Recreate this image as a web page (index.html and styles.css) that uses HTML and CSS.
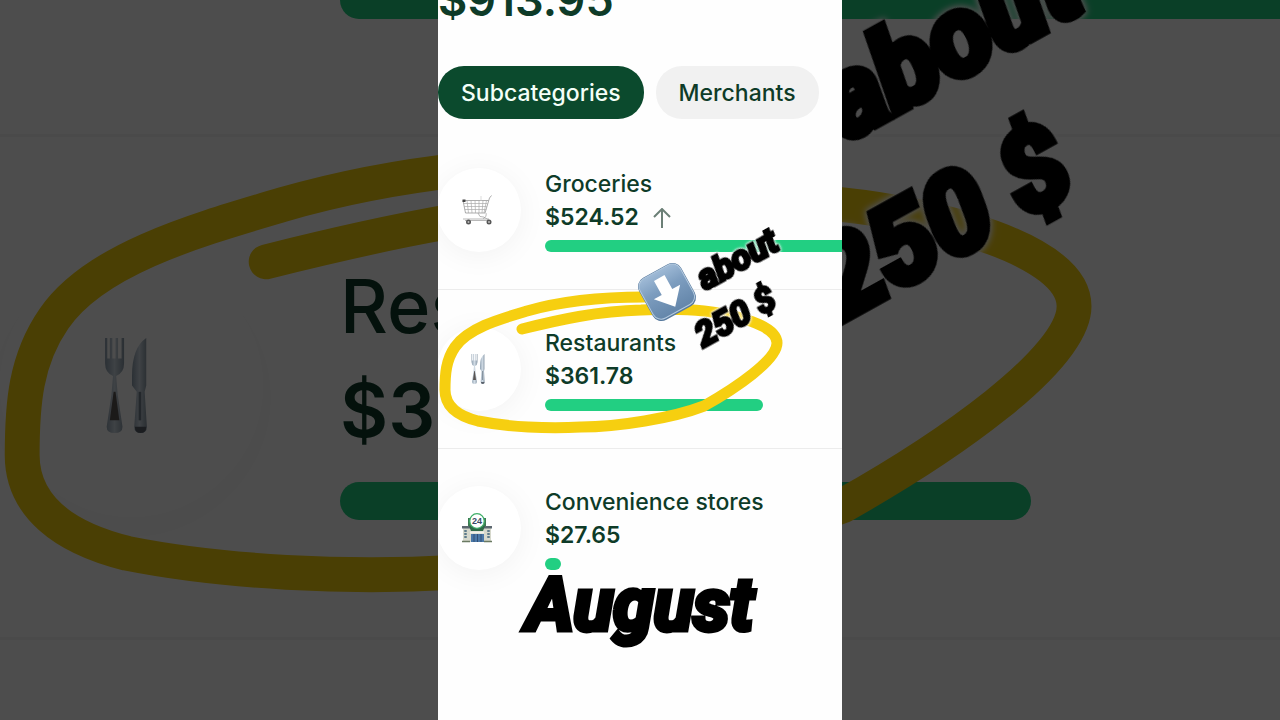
FILE: index.html
```html
<!DOCTYPE html>
<html lang="en">
<head>
    <meta charset="UTF-8">
    <meta name="viewport" content="width=device-width, initial-scale=1.0">
    <title>August spending</title>
    <link rel="stylesheet" href="styles.css">
</head>

<body>
    <!-- shared drawings -->
    <svg class="defs" aria-hidden="true">
        <defs>
            <linearGradient id="steel" x1="0" y1="0" x2="1" y2="0">
                <stop offset="0" stop-color="#8fa0b0"/>
                <stop offset="0.5" stop-color="#cfdae4"/>
                <stop offset="1" stop-color="#8b9aa8"/>
            </linearGradient>
            <linearGradient id="key" x1="0" y1="0" x2="0" y2="1">
                <stop offset="0" stop-color="#9fbad6"/>
                <stop offset="0.4" stop-color="#7d9dbf"/>
                <stop offset="1" stop-color="#6486aa"/>
            </linearGradient>
        </defs>

        <symbol id="cutlery" viewBox="0 0 30 30">
            <path d="M9.500 0v8q0 3 2.500 4l-.5 6-1.500 10q0 2 2.500 2t2.500-2L13.500 18l-.5-6q2.500-1 2.500-4V0h-.8v6.500h-1.100V0h-.8v6.500h-1V0H11v6.500h-.8V0z" fill="url(#steel)"/>
            <path d="M12.200 17l-1.200 9h3l-1.200-9z" fill="#5b5654"/>
            <path d="M22.500 0q-4.500 3-4.500 12v3l1.500 2-.8 11q0 2 2 2t2-2l-.7-11 .5-2V0z" fill="url(#steel)"/>
            <path d="M20.500 17v9" stroke="#75828e" stroke-width=".8"/>
            <path d="M18.900 28h3.600q0 2-1.800 2t-1.800-2z" fill="#59616b"/>
        </symbol>

        <symbol id="cart" viewBox="0 0 30 30">
            <g fill="none" stroke="#888" stroke-width=".7">
                <path d="M29.500.5l-2 2.500-4.500 15H3.500L1 5.500h25.500"/>
                <path d="M1.500 8.500h24M2.200 11.500h22.500M2.800 14.500h21.500" stroke="#aaa"/>
                <path d="M5 5.500L6.500 18M9 5.500l1 12.500M13 5.500l.5 12.500M17 5.500V18M21 5.500L20 18M24.500 5.500L22 18" stroke="#aaa"/>
                <path d="M19 1v5" stroke="#ccc"/>
                <path d="M16 18l2 3.500q4 0 6.500 2l2.500 2M24 18q1 4-3 5.500M1 24h26M3 25.500h24" stroke="#999"/>
            </g>
            <path d="M.5 4.500h3V7h-3z" fill="#444"/>
            <circle cx="6.500" cy="27" r="2.500" fill="#555"/>
            <circle cx="6.500" cy="27" r="1" fill="#bbb"/>
            <circle cx="27" cy="27" r="2.500" fill="#555"/>
            <circle cx="27" cy="27" r="1" fill="#bbb"/>
        </symbol>

        <symbol id="store" viewBox="0 0 30 30">
            <path d="M6 5h18v9H6z" fill="#3d7a52"/>
            <path d="M1 15h28v14H1z" fill="#d6d8cc"/>
            <path d="M0 13h30v2.500H0z" fill="#5d6870"/>
            <path d="M7 13h16l-2 5H9z" fill="#2f6a48"/>
            <path d="M8 18.500h14v2H8z" fill="#f1f1e8"/>
            <path d="M9 21h13v8H9z" fill="#4b78a8"/>
            <path d="M12 21v8M15.500 21v8M19 21v8" stroke="#2f4c70" stroke-width=".9"/>
            <path d="M3.500 17v9M26.500 17v9" stroke="#5f7c8c" stroke-width="2.500" stroke-dasharray="2 1"/>
            <path d="M0 28.500h8M22 28.500h8" stroke="#6a7a62" stroke-width="1.500"/>
            <circle cx="15" cy="8" r="7.300" fill="#fff" stroke="#3fae68" stroke-width="1.300"/>
            <text class="store-sign" x="15" y="11" text-anchor="middle">24</text>
        </symbol>

        <symbol id="marker" viewBox="0 0 404 720">
            <path class="marker-line" d="M84 329C120 320 160 311 203 310C225 309 248 309 266 311C295 314 339 325 339 343C339 360 298 388 266 406C235 418 180 427 143 427C110 429 70 427 40 421C20 416 7 406 7 390C7 374 8 360 17 347C30 328 62 319 89 311C127 300 165 297 206 297"/>
            <g transform="translate(229 292) rotate(-29)">
                <rect x="-24" y="-24" width="48" height="48" rx="10" fill="#587a9e"/>
                <rect x="-23" y="-23" width="46" height="45" rx="9" fill="url(#key)" stroke="#b4cadf" stroke-width="1"/>
                <path d="M-6-16H6V0h9L0 17-15 0h9z" fill="#fff"/>
            </g>
            <g class="note" transform="translate(267 291) rotate(-29)">
                <text x="0" y="0">about</text>
            </g>
            <g class="note" transform="translate(265 348) rotate(-29)">
                <text x="0" y="0">250 $</text>
            </g>
        </symbol>
    </svg>

    <!-- enlarged, darkened copy behind the phone -->
    <div class="backdrop" aria-hidden="true">
        <div class="backdrop-content">
            <div class="big-row big-row-first">
                <div class="big-bar big-bar-long"></div>
            </div>
            <div class="big-row">
                <div class="big-icon"><svg><use href="#cutlery"/></svg></div>
                <div class="big-info">
                    <div class="big-name">Restaurants</div>
                    <div class="big-amount">$361.78</div>
                    <div class="big-bar"></div>
                </div>
            </div>
            <svg class="big-marker" viewBox="0 0 404 720" preserveAspectRatio="xMidYMid slice"><use href="#marker"/></svg>
        </div>
    </div>

    <main class="phone">
        <h1 class="total">$913.95</h1>

        <div class="tabs">
            <button type="button" class="tab active">Subcategories</button>
            <button type="button" class="tab">Merchants</button>
        </div>

        <ul class="list">
            <li class="row">
                <div class="icon"><svg><use href="#cart"/></svg></div>
                <div class="info">
                    <div class="name">Groceries</div>
                    <div class="amount">$524.52
                        <svg class="trend" viewBox="0 0 18 20"><path d="M9 20V1M1 9l8-8 8 8"/></svg>
                    </div>
                    <div class="bar" style="width: 107%"></div>
                </div>
            </li>
            <li class="row">
                <div class="icon"><svg><use href="#cutlery"/></svg></div>
                <div class="info">
                    <div class="name">Restaurants</div>
                    <div class="amount">$361.78</div>
                    <div class="bar" style="width: 73.5%"></div>
                </div>
            </li>
            <li class="row">
                <div class="icon"><svg><use href="#store"/></svg></div>
                <div class="info">
                    <div class="name">Convenience stores</div>
                    <div class="amount">$27.65</div>
                    <div class="bar" style="width: 5.5%"></div>
                </div>
            </li>
        </ul>

        <svg class="overlay" viewBox="0 0 404 720"><use href="#marker"/></svg>
        <div class="caption">August</div>
    </main>
</body>
</html>
```
FILE: styles.css
```css
* {
    box-sizing: border-box;
}

body {
    margin: 0;
    min-height: 100vh;
    display: flex;
    justify-content: center;
    background: #000;
    color: #0e3b28;
    font-family: Inter, "Liberation Sans", sans-serif;
    overflow: hidden;
}

.defs {
    position: absolute;
    width: 0;
    height: 0;
}

/* backdrop */
.backdrop {
    position: absolute;
    inset: 0;
    overflow: hidden;
    background: #000;
}

.backdrop-content {
    height: 100%;
    background: #fff;
    opacity: 0.3;
}

.big-row {
    display: flex;
    gap: 77px;
    padding: 117px 0;
    border-bottom: 3px solid #f3f3f3;
}

.big-row-first {
    padding: 0 0 115px 340px;
}

.big-icon {
    width: 263px;
    height: 263px;
    display: flex;
    align-items: center;
    justify-content: center;
    padding-right: 18px;
    border-radius: 50%;
    background: #fff;
    box-shadow: 0 12px 90px rgba(0, 0, 0, 0.03);
}

.big-icon svg {
    width: 95px;
    height: 95px;
}

.big-info {
    flex: 1;
}

.big-name,
.big-amount {
    font-size: 74px;
    line-height: 104px;
    font-weight: 500;
}

.big-amount {
    font-weight: 600;
    margin-bottom: 20px;
}

.big-bar {
    width: 691px;
    height: 38px;
    border-radius: 19px;
    background: #22cf82;
}

.big-bar-long {
    width: 100%;
    margin-top: -19px;
    border-radius: 19px 0 0 19px;
}

.big-marker {
    position: absolute;
    top: 0;
    left: 0;
    width: 100%;
    height: 100%;
}

/* phone */
.phone {
    position: relative;
    height: 100vh;
    aspect-ratio: 101 / 180;
    overflow: hidden;
    background: #fefefe;
}

.total {
    margin: -28px 0 38px;
    font-size: 45px;
    line-height: 56px;
    font-weight: 600;
}

.tabs {
    display: flex;
    gap: 12px;
}

.tab {
    height: 53px;
    padding: 0 23px;
    border: none;
    border-radius: 26px;
    background: #f1f1f1;
    color: #0e3b28;
    font-family: inherit;
    font-size: 23px;
    font-weight: 500;
    white-space: nowrap;
}

.tab.active {
    background: #0b4a2d;
    color: #f4fff8;
}

.list {
    list-style: none;
    margin: 12px 0 0;
    padding: 0;
}

.row {
    display: flex;
    gap: 24px;
    padding: 37px 0;
    border-bottom: 1px solid #ececec;
}

.row:last-child {
    border-bottom: none;
}

.icon {
    flex: none;
    width: 84px;
    height: 84px;
    display: flex;
    align-items: center;
    justify-content: center;
    margin-left: -1px;
    padding-right: 4px;
    border-radius: 50%;
    background: #fff;
    box-shadow: 0 4px 30px rgba(0, 0, 0, 0.05);
}

.icon svg {
    width: 30px;
    height: 30px;
}

.info {
    flex: 1;
    min-width: 0;
}

.name,
.amount {
    font-size: 23px;
    line-height: 33px;
    font-weight: 500;
    white-space: nowrap;
}

.amount {
    display: flex;
    align-items: center;
    gap: 14px;
    margin-bottom: 6px;
    font-weight: 600;
}

.trend {
    width: 18px;
    height: 20px;
    fill: none;
    stroke: #6b7f76;
    stroke-width: 2;
}

.bar {
    height: 12px;
    border-radius: 6px;
    background: #22cf82;
}

.store-sign {
    font: bold 9px "Liberation Sans", sans-serif;
    fill: #3b4a66;
}

/* drawn on top of the list */
.overlay {
    position: absolute;
    top: 0;
    left: 0;
    width: 100%;
    height: 100%;
}

.marker-line {
    fill: none;
    stroke: #f6cf10;
    stroke-width: 11;
    stroke-linecap: round;
    stroke-linejoin: round;
}

.note {
    font: italic bold 35px "Liberation Sans Narrow", Roboto, sans-serif;
    fill: #000;
    stroke: #000;
    stroke-width: 3;
    filter: drop-shadow(0 0 1px #fff) drop-shadow(0 0 1px #fff);
}

.caption {
    position: absolute;
    left: 0;
    right: 0;
    bottom: 65px;
    text-align: center;
    font: italic bold 73px/100px "Liberation Sans Narrow", Roboto, sans-serif;
    color: #000;
    -webkit-text-stroke: 5px #000;
}
```
